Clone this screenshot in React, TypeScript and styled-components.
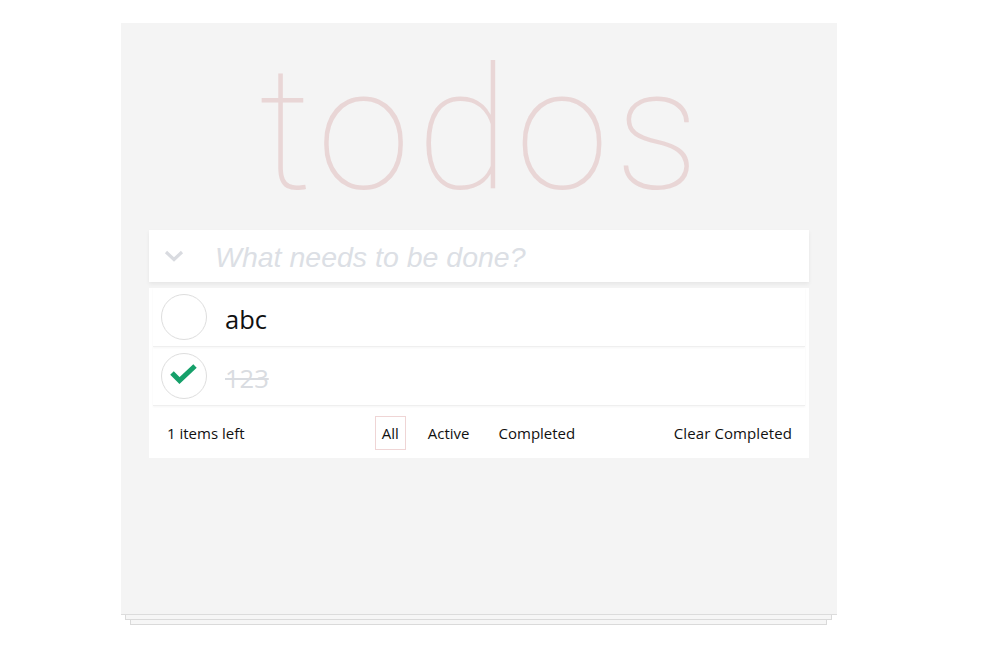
import React from "react";
import styled, { createGlobalStyle } from "styled-components";

const Global = createGlobalStyle`
  html, body { margin: 0; padding: 0; background: #ffffff; }
  body { padding: 23px 0 0 121px; font-family: "Open Sans", "Liberation Sans", sans-serif; }
  * { box-sizing: border-box; }
`;

const Stack = styled.div`
  width: 716px;
  display: flex;
  flex-direction: column;
`;

const Page = styled.section`
  min-height: 592px;
  background: #f4f4f4;
  padding: 0 28px;
  display: flex;
  flex-direction: column;
  border-bottom: 1px solid #dcdcdc;
`;

const Sheet = styled.div<{ $inset: number }>`
  height: 5px;
  margin: 0 ${(p) => p.$inset + 1}px 0 ${(p) => p.$inset}px;
  background: #f6f6f6;
  border: 1px solid #dadada;
  border-top: none;
`;

const Title = styled.h1`
  margin: 22px 0 15px;
  padding-left: 6px;
  text-align: center;
  font-family: "Roboto", "Helvetica Neue", sans-serif;
  font-weight: 100;
  font-size: 170px;
  line-height: 1;
  color: rgba(175, 47, 47, 0.15);
  letter-spacing: 6px;
`;

const Header = styled.div`
  height: 52px;
  background: #fff;
  display: flex;
  align-items: center;
  box-shadow: 0 2px 4px rgba(0, 0, 0, 0.06);
  position: relative;
  z-index: 1;
`;

const ToggleAll = styled.span`
  width: 66px;
  padding-left: 15px;
  display: flex;
  align-items: center;
`;

const NewTodo = styled.input`
  flex: 1;
  border: none;
  outline: none;
  background: transparent;
  font-family: "Liberation Sans", Arial, sans-serif;
  font-size: 28.5px;
  color: #222;
  padding: 2px 0 0;
  &::placeholder {
    font-style: italic;
    color: #dcdfe5;
  }
`;

const Main = styled.div`
  margin-top: 6px;
  background: #fff;
`;

const List = styled.ul`
  list-style: none;
  margin: 0;
  padding: 0;
`;

const Item = styled.li`
  margin: 0 4px;
  height: 59px;
  display: flex;
  align-items: center;
  padding-left: 8px;
  border-bottom: 1px solid #efefef;
  box-shadow: 0 1px 2px rgba(0, 0, 0, 0.04);
`;

const Check = styled.span`
  width: 46px;
  height: 46px;
  border-radius: 50%;
  border: 1px solid #dedede;
  display: flex;
  align-items: center;
  justify-content: center;
  flex-shrink: 0;
`;

const CheckMark = styled.svg`
  margin: -2px 0 0 -2px;
`;

const Label = styled.span<{ $done?: boolean }>`
  margin-left: 18px;
  padding-top: 3px;
  font-size: 25.5px;
  color: ${(p) => (p.$done ? "#d9dce1" : "#111")};
  text-decoration: ${(p) => (p.$done ? "line-through" : "none")};
`;

const Footer = styled.footer`
  height: 52px;
  display: grid;
  grid-template-columns: 1fr auto 1fr;
  align-items: center;
  padding: 1px 17px 0 18px;
  font-size: 15px;
  color: #111;
`;

const Count = styled.span``;

const Filters = styled.div`
  display: flex;
  gap: 15px;
  margin-left: -2px;
`;

const Filter = styled.a<{ $selected?: boolean }>`
  padding: 6px 6px;
  line-height: 20px;
  border: 1px solid ${(p) => (p.$selected ? "rgba(175, 47, 47, 0.2)" : "transparent")};
  color: #111;
  text-decoration: none;
`;

const Clear = styled.span`
  justify-self: end;
  letter-spacing: 0.1px;
`;

export default function App() {
  return (
    <>
      <Global />
      <Stack>
        <Page>
          <Title>todos</Title>
          <Header>
            <ToggleAll>
              <svg width="20" height="12" viewBox="0 0 20 12">
                <polyline points="2,2 10,9.5 18,2" fill="none" stroke="#d9dbe0" strokeWidth="3.2" />
              </svg>
            </ToggleAll>
            <NewTodo placeholder="What needs to be done?" />
          </Header>
          <Main>
            <List>
              <Item>
                <Check />
                <Label>abc</Label>
              </Item>
              <Item>
                <Check>
                  <CheckMark width="46" height="46" viewBox="0 0 46 46">
                    <polyline points="12,21 19.5,28.5 35,14" fill="none" stroke="#16a06a" strokeWidth="5" />
                  </CheckMark>
                </Check>
                <Label $done>123</Label>
              </Item>
            </List>
            <Footer>
              <Count>1 items left</Count>
              <Filters>
                <Filter $selected>All</Filter>
                <Filter>Active</Filter>
                <Filter>Completed</Filter>
              </Filters>
              <Clear>Clear Completed</Clear>
            </Footer>
          </Main>
        </Page>
        <Sheet $inset={4} />
        <Sheet $inset={9} />
      </Stack>
    </>
  );
}
